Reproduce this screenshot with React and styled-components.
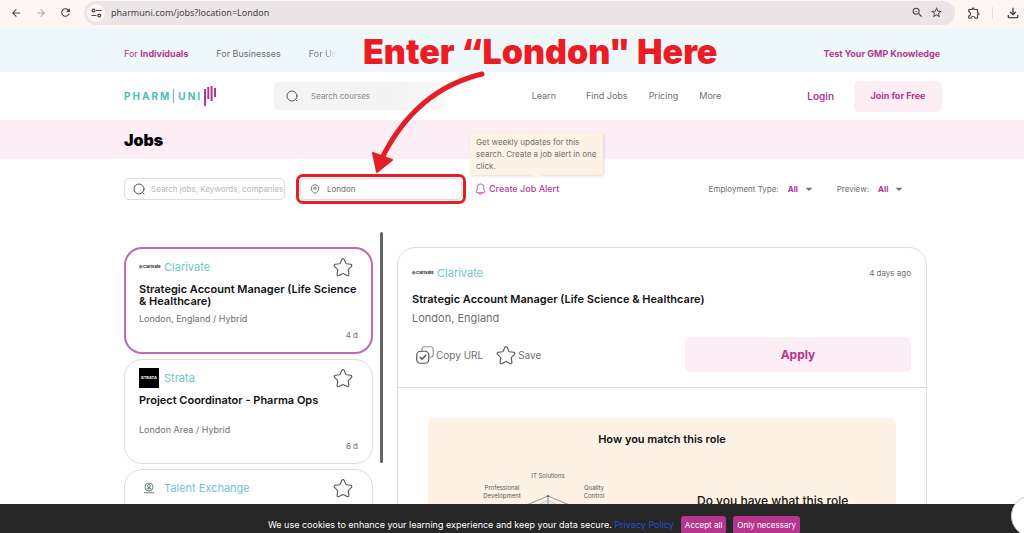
import React from "react";
import styled, { createGlobalStyle } from "styled-components";
import {
  MdArrowBack,
  MdArrowForward,
  MdRefresh,
  MdStarBorder,
  MdZoomOut,
  MdOutlineExtension,
  MdOutlineFileDownload,
  MdArrowDropDown,
} from "react-icons/md";

const c = {
  pink: "#b5358f",
  blush: "#fdeef6",
  mint: "#eef8fa",
  teal: "#6cc8c8",
  cream: "#fef2e4",
  grey: "#707070",
  line: "#dcdcdc",
  red: "#e41e26",
  dark: "#262626",
};

const Global = createGlobalStyle`
  * { box-sizing: border-box; }
  html { scrollbar-width: none; }
  body { margin: 0; background: #fefefe; color: #111; font: 10px/12px Inter, "Liberation Sans", sans-serif; }
  h1, h2, h3, p { margin: 0; }
  a { color: inherit; text-decoration: none; }
  button, input, select { font: inherit; color: inherit; border: 0; background: none; padding: 0; margin: 0; outline: 0; }
  button { cursor: pointer; }
  svg { display: block; flex: none; }
`;

const Page = styled.div`
  position: relative;
  height: 100vh;
  overflow: hidden;
`;

/* Browser bar */
const BrowserBar = styled.div`
  display: flex;
  align-items: center;
  height: 28px;
  padding: 0 6px 3px 9px;
  gap: 12px;
  background: #fdf6f3;
  color: #444;
`;
const NavButton = styled.button`
  display: grid;
  place-items: center;
  width: 13px;
  color: ${(p) => (p.$muted ? "#aaa" : "#444")};
`;
const AddressBar = styled.div`
  display: flex;
  align-items: center;
  flex: 1;
  height: 24px;
  padding: 0 12px 0 3px;
  gap: 6px;
  border-radius: 12px;
  background: #ebe5e7;
`;
const SiteInfo = styled.button`
  display: grid;
  place-items: center;
  width: 18px;
  height: 18px;
  border-radius: 9px;
  background: #fbf5f5;
`;
const Address = styled.input`
  flex: 1;
  min-width: 0;
  color: #444;
  font: 9px/14px "Noto Sans", sans-serif;
`;
const Separator = styled.span`
  width: 1px;
  height: 12px;
  background: #e6dcda;
`;

/* Site header */
const AudienceBar = styled.nav`
  display: flex;
  align-items: center;
  gap: 28px;
  height: 44px;
  padding: 8px 84px 0 124px;
  background: ${c.mint};
  color: ${c.grey};
  font-size: 9px;
`;
const AudienceLink = styled.a`
  color: ${(p) => (p.$active ? c.pink : "inherit")};
  ${(p) =>
    p.$fade &&
    `background: linear-gradient(90deg, ${c.grey} 55%, transparent 100%);
     background-clip: text; color: transparent;`}
`;
const TestLink = styled.a`
  margin-left: auto;
  color: ${c.pink};
  font-weight: 700;
`;
const Header = styled.header`
  display: flex;
  align-items: center;
  height: 48px;
  padding: 0 82px 0 124px;
  color: ${c.grey};
`;
const Brand = styled.a`
  display: flex;
  align-items: center;
  width: 150px;
  gap: 2px;
  color: #4dbfb5;
  font: 700 10px/20px Inter, sans-serif;
  letter-spacing: 2px;
`;
const BrandRule = styled.span`
  width: 1px;
  height: 14px;
  margin-right: 2px;
  background: #4dbfb5;
`;
const CourseSearch = styled.label`
  display: flex;
  align-items: center;
  width: 171px;
  height: 28px;
  padding: 0 12px;
  gap: 13px;
  border-radius: 4px;
  background: linear-gradient(90deg, #f5f4f4 70%, #faf9f9);
`;
const TextInput = styled.input`
  flex: 1;
  min-width: 0;
  font-size: 8px;
  color: ${c.grey};
  &::placeholder { color: ${(p) => (p.$pale ? "#b8b8b8" : "#888")}; opacity: 1; }
`;
const MainNav = styled.nav`
  display: flex;
  gap: 21px;
  margin-left: auto;
  font-size: 9px;
  a:first-child { margin-right: 9px; }
`;
const LoginLink = styled.a`
  margin: 0 20px 0 86px;
  color: ${c.pink};
  font-size: 10px;
  font-weight: 600;
`;
const SoftButton = styled.button`
  height: ${(p) => (p.$large ? 35 : 31)}px;
  width: ${(p) => (p.$large ? 226 : 88)}px;
  border-radius: 6px;
  background: ${c.blush};
  color: ${c.pink};
  font-size: ${(p) => (p.$large ? 12 : 9)}px;
  font-weight: 700;
`;
const TitleBand = styled.div`
  display: flex;
  align-items: center;
  height: 39px;
  padding-left: 124px;
  background: ${c.blush};
`;
const PageTitle = styled.h1`
  font-size: 16px;
  line-height: 20px;
  font-weight: 900;
  color: #000;
`;

/* Filters */
const Filters = styled.form`
  display: flex;
  align-items: center;
  height: 88px;
  padding: 0 117px 28px 124px;
  color: ${c.grey};
  font-size: 8px;
`;
const Field = styled.label`
  display: flex;
  align-items: center;
  width: ${(p) => p.$width}px;
  height: 22px;
  padding-left: 8px;
  gap: 6px;
  border: 1px solid ${c.line};
  border-radius: 5px;
`;
const Highlight = styled.div`
  margin: 0 9px 0 11px;
  padding: 1px;
  border: 3px solid ${c.red};
  border-radius: 7px;
`;
const AlertArea = styled.div`
  position: relative;
`;
const AlertButton = styled.button`
  display: flex;
  align-items: center;
  gap: 3px;
  color: #b03da0;
  font-size: 9px;
  font-weight: 500;
`;
const AlertTip = styled.div`
  position: absolute;
  left: -5px;
  bottom: 20px;
  width: 133px;
  padding: 3px 6px;
  border-radius: 3px;
  background: ${c.cream};
  box-shadow: 1px 1px 3px #0002;
  line-height: 12px;
  &::after {
    content: "";
    position: absolute;
    left: 62px;
    bottom: -4px;
    border: solid transparent;
    border-width: 4px 5px 0;
    border-top-color: ${c.cream};
  }
`;
const Picks = styled.div`
  display: flex;
  gap: 20px;
  margin-left: auto;
`;
const Pick = styled.label`
  display: flex;
  align-items: center;
`;
const PickSelect = styled.select`
  appearance: none;
  margin: 0 2px 0 9px;
  color: ${c.pink};
  font-weight: 700;
`;

/* Job list and details */
const Content = styled.main`
  display: flex;
  align-items: flex-start;
  padding: 0 97px 0 124px;
`;
const JobList = styled.div`
  display: flex;
  flex-direction: column;
  flex: none;
  width: 249px;
  gap: 5px;
`;
const JobCard = styled.article`
  padding: ${(p) => (p.$selected ? "8px 13px 11px" : "8px 14px 11px")};
  border: ${(p) => (p.$selected ? `2px solid #c06ab4` : `1px solid ${c.line}`)};
  border-radius: 18px;
`;
const CompanyRow = styled.div`
  display: flex;
  align-items: center;
  height: 20px;
  gap: 5px;
`;
const Company = styled.a`
  flex: 1;
  color: ${c.teal};
  font-size: 11px;
`;
const LogoBox = styled.span`
  display: grid;
  place-items: center;
  width: 20px;
  height: 20px;
  background: ${(p) => (p.$dark ? "#000" : "transparent")};
  color: ${(p) => (p.$dark ? "#fff" : "#222")};
  font: 700 4px/6px Inter, sans-serif;
  white-space: nowrap;
`;
const IconButton = styled.button`
  display: flex;
  align-items: center;
  gap: 2px;
  margin-right: ${(p) => (p.$card ? 5 : 0)}px;
  color: ${c.grey};
  font-size: 10px;
`;
const CardTitle = styled.h2`
  min-height: 24px;
  margin: 6px 0;
  font-size: 11px;
  line-height: 12px;
  font-weight: 600;
`;
const Place = styled.p`
  color: ${c.grey};
  font-size: ${(p) => (p.$large ? 11 : 9)}px;
  line-height: 12px;
`;
const Age = styled.p`
  margin-top: 4px;
  color: ${c.grey};
  font-size: 8px;
  line-height: 12px;
  text-align: right;
`;
const ScrollThumb = styled.div`
  flex: none;
  width: 3px;
  height: 231px;
  margin: -15px 14px 0 7px;
  border-radius: 2px;
  background: #666;
`;
const Detail = styled.section`
  flex: 1;
  min-width: 0;
  border: 1px solid ${c.line};
  border-radius: 18px;
`;
const DetailHead = styled.div`
  padding: 15px 15px 15px 14px;
  border-bottom: 1px solid ${c.line};
`;
const DetailTitle = styled.h2`
  margin: 9px 0 6px;
  font-size: 11px;
  line-height: 14px;
  font-weight: 600;
`;
const DetailAge = styled.time`
  color: ${c.grey};
  font-size: 8px;
`;
const Actions = styled.div`
  display: flex;
  align-items: center;
  gap: 13px;
  margin-top: 13px;
  padding-left: 4px;
  button:last-child { margin-left: auto; }
`;
const MatchPanel = styled.div`
  margin: 30px;
  padding-top: 14px;
  border-radius: 6px;
  background: ${c.cream};
`;
const MatchTitle = styled.h3`
  font-size: 11px;
  line-height: 14px;
  font-weight: 600;
  text-align: center;
`;
const MatchBody = styled.div`
  display: grid;
  grid-template-columns: 240px 1fr;
  margin-top: 26px;
`;
const MatchQuestion = styled.p`
  padding: 20px 29px;
  font-size: 12px;
  line-height: 17px;
  font-weight: 500;
`;

/* Overlays */
const CookieBar = styled.aside`
  position: fixed;
  inset: auto 0 0 0;
  display: flex;
  justify-content: center;
  height: 29px;
  padding: 12px 0 0 44px;
  gap: 7px;
  overflow: hidden;
  background: ${c.dark};
  color: #fff;
  font-size: 9px;
  line-height: 18px;
  white-space: nowrap;
  a { color: #2352d8; }
`;
const CookieButton = styled.button`
  height: 18px;
  padding: 0 4px;
  border-radius: 3px;
  background: ${c.pink};
  font-size: 8px;
`;
const ChatButton = styled.button`
  position: fixed;
  right: -29px;
  bottom: -4px;
  width: 42px;
  height: 42px;
  border: 1px solid #ccc;
  border-radius: 50%;
  background: #fff;
`;
const Callout = styled.div`
  position: absolute;
  top: 32px;
  left: 363px;
  color: #ec1c24;
  font-size: 34px;
  line-height: 40px;
  font-weight: 900;
  white-space: nowrap;
`;
const CalloutArrow = styled.svg`
  position: absolute;
  top: 68px;
  left: 366px;
`;

const Lens = ({ size = 12 }) => (
  <svg width={size} height={size} viewBox="0 0 24 24" fill="none" stroke="#555" strokeWidth="2" strokeLinecap="round">
    <circle cx="12" cy="12" r="10" />
    <path d="M19.5 19.5 22 22" />
  </svg>
);
const Star = () => (
  <svg width="20" height="20" viewBox="0 0 24 24" fill="none" stroke="#555" strokeWidth="1.3" strokeLinejoin="round">
    <path d="M10.7 2.8c.6-1.3 2-1.3 2.6 0l2 4.4c.2.4.5.7 1 .8l4.9.8c1.4.2 1.9 1.500.9 2.500l-3.500 3.600c-.3.3-.4.8-.3 1.200l.8 4.700c.2 1.500-.9 2.200-2.200 1.500l-4.200-2.300c-.4-.2-1-.2-1.400 0l-4.200 2.300c-1.300.7-2.400 0-2.200-1.500l.8-4.700c.1-.4 0-.9-.3-1.200L1.900 11.300c-1-1-.5-2.300.9-2.500L7.700 8c.5-.1.8-.4 1-.8z" />
  </svg>
);
const CopyIcon = () => (
  <svg width="18" height="18" viewBox="0 0 24 24" fill="none" stroke="#555" strokeWidth="1.6" strokeLinecap="round" strokeLinejoin="round">
    <path stroke="#999" d="M8 6V5c0-3 1-4 4-4h7c3 0 4 1 4 4v6c0 3-1 4-4 4" />
    <rect x="1" y="7" width="16" height="16" rx="5" />
    <path d="m5.500 15 2.500 2.500 5-5" strokeWidth="2" />
  </svg>
);
const Bell = () => (
  <svg width="11" height="12" viewBox="0 0 22 24" fill="none" stroke="#b03da0" strokeWidth="1.8" strokeLinejoin="round">
    <path d="M11 2C7 2 4.500 5 4.500 9v3.500c0 1.500-2.500 3.500-2.500 5C2 19 3 19.500 5 19.500h12c2 0 3-.5 3-2 0-1.500-2.500-3.500-2.500-5V9c0-4-2.500-7-6.500-7z" />
    <path d="M8 20c.5 3 5.500 3 6 0" />
  </svg>
);
const Pin = () => (
  <svg width="12" height="10" viewBox="0 0 24 20" fill="none" stroke="#555" strokeWidth="1.6">
    <path d="M12 1.500c-4.500 0-7.500 3.200-7.500 7.200 0 4.800 4.500 9.800 7.500 9.800s7.500-5 7.500-9.800c0-4-3-7.200-7.500-7.200z" />
    <circle cx="12" cy="8.500" r="2.300" />
  </svg>
);
const Tune = () => (
  <svg width="11" height="10" viewBox="0 0 22 20" fill="none" stroke="#444" strokeWidth="2.400">
    <circle cx="5" cy="5" r="2.800" />
    <path d="M10 5h11M1 15h10" />
    <circle cx="16.500" cy="15" r="2.800" />
  </svg>
);
const BrandMark = () => (
  <svg width="12" height="22" viewBox="0 0 12 22" fill="none" stroke="#b5358f" strokeWidth="2">
    <path d="M1 21V4M4.300 14V2M7.600 16V1M11 12V3" />
  </svg>
);
const BadgeLogo = () => (
  <svg width="12" height="12" viewBox="0 0 24 24" fill="none" stroke="#456b67" strokeWidth="1.600">
    <circle cx="12" cy="10" r="8" />
    <circle cx="12" cy="8" r="3" />
    <path d="M7 14q5-5 10 0M12 10v6M2 21.500h20" />
  </svg>
);
const Radar = () => (
  <svg width="240" height="150" viewBox="0 0 240 150" fill="#555" fontSize="6" textAnchor="middle">
    <text x="120" y="6">IT Solutions</text>
    <text x="74" y="18">Professional</text>
    <text x="74" y="26">Development</text>
    <text x="166" y="18">Quality</text>
    <text x="166" y="26">Control</text>
    <g fill="none" stroke="#8b949c" strokeWidth="1">
      <path d="M120 24 168 44 180 92 148 130H92L60 92 72 44z" />
      <path d="M120 28 160 48 170 90 144 122H96L70 90 80 48z" fill="#e4e9ee" stroke="#c6d0d8" />
      <path d="M120 24v60" />
    </g>
    <circle cx="120" cy="24" r="1" />
  </svg>
);

const jobs = [
  { company: "Clarivate", logo: "◎ Clarivate", title: "Strategic Account Manager (Life Science & Healthcare)", place: "London, England / Hybrid", age: "4 d", selected: true },
  { company: "Strata", logo: "STRATA", dark: true, title: "Project Coordinator - Pharma Ops", place: "London Area / Hybrid", age: "6 d" },
  { company: "Talent Exchange", logo: <BadgeLogo />, title: "", place: "", age: "" },
];

function Select({ label }) {
  return (
    <Pick>
      {label}
      <PickSelect aria-label={label}>
        <option>All</option>
      </PickSelect>
      <MdArrowDropDown size={16} />
    </Pick>
  );
}

export default function App() {
  return (
    <Page>
      <Global />
      <BrowserBar>
        <NavButton aria-label="Back"><MdArrowBack size={12} /></NavButton>
        <NavButton aria-label="Forward" $muted><MdArrowForward size={12} /></NavButton>
        <NavButton aria-label="Reload"><MdRefresh size={13} /></NavButton>
        <AddressBar>
          <SiteInfo aria-label="Site information"><Tune /></SiteInfo>
          <Address aria-label="Address" defaultValue="pharmuni.com/jobs?location=London" />
          <NavButton aria-label="Zoom"><MdZoomOut size={13} /></NavButton>
          <NavButton aria-label="Bookmark"><MdStarBorder size={13} /></NavButton>
        </AddressBar>
        <NavButton aria-label="Extensions"><MdOutlineExtension size={14} /></NavButton>
        <Separator />
        <NavButton aria-label="Downloads"><MdOutlineFileDownload size={16} /></NavButton>
      </BrowserBar>

      <AudienceBar>
        <AudienceLink href="#" $active>For <b>Individuals</b></AudienceLink>
        <AudienceLink href="#">For Businesses</AudienceLink>
        <AudienceLink href="#" $fade>For Un</AudienceLink>
        <TestLink href="#">Test Your GMP Knowledge</TestLink>
      </AudienceBar>

      <Header>
        <Brand href="#">
          PHARM<BrandRule />UNI<BrandMark />
        </Brand>
        <CourseSearch>
          <Lens />
          <TextInput aria-label="Search courses" placeholder="Search courses" />
        </CourseSearch>
        <MainNav>
          <a href="#">Learn</a>
          <a href="#">Find Jobs</a>
          <a href="#">Pricing</a>
          <a href="#">More</a>
        </MainNav>
        <LoginLink href="#">Login</LoginLink>
        <SoftButton>Join for Free</SoftButton>
      </Header>

      <TitleBand><PageTitle>Jobs</PageTitle></TitleBand>

      <Filters>
        <Field $width={161}>
          <Lens />
          <TextInput $pale aria-label="Search jobs" placeholder="Search jobs, Keywords, companies" />
        </Field>
        <Highlight>
          <Field $width={162}>
            <Pin />
            <TextInput aria-label="Location" defaultValue="London" />
          </Field>
        </Highlight>
        <AlertArea>
          <AlertButton type="button"><Bell />Create Job Alert</AlertButton>
          <AlertTip role="tooltip">Get weekly updates for this search. Create a job alert in one click.</AlertTip>
        </AlertArea>
        <Picks>
          <Select label="Employment Type:" />
          <Select label="Preview:" />
        </Picks>
      </Filters>

      <Content>
        <JobList>
          {jobs.map((job) => (
            <JobCard key={job.company} $selected={job.selected}>
              <CompanyRow>
                <LogoBox $dark={job.dark}>{job.logo}</LogoBox>
                <Company href="#">{job.company}</Company>
                <IconButton $card aria-label="Save job"><Star /></IconButton>
              </CompanyRow>
              <CardTitle>{job.title}</CardTitle>
              <Place>{job.place}</Place>
              <Age>{job.age}</Age>
            </JobCard>
          ))}
        </JobList>
        <ScrollThumb />
        <Detail>
          <DetailHead>
            <CompanyRow>
              <LogoBox>◎ Clarivate</LogoBox>
              <Company href="#">Clarivate</Company>
              <DetailAge>4 days ago</DetailAge>
            </CompanyRow>
            <DetailTitle>Strategic Account Manager (Life Science &amp; Healthcare)</DetailTitle>
            <Place $large>London, England</Place>
            <Actions>
              <IconButton><CopyIcon />Copy URL</IconButton>
              <IconButton><Star />Save</IconButton>
              <SoftButton $large>Apply</SoftButton>
            </Actions>
          </DetailHead>
          <MatchPanel>
            <MatchTitle>How you match this role</MatchTitle>
            <MatchBody>
              <Radar />
              <MatchQuestion>Do you have what this role</MatchQuestion>
            </MatchBody>
          </MatchPanel>
        </Detail>
      </Content>

      <CookieBar>
        <span>
          We use cookies to enhance your learning experience and keep your data secure. <a href="#">Privacy Policy</a>
        </span>
        <CookieButton>Accept all</CookieButton>
        <CookieButton>Only necessary</CookieButton>
      </CookieBar>
      <ChatButton aria-label="Open chat" />

      <Callout>Enter “London" Here</Callout>
      <CalloutArrow width="122" height="108" viewBox="0 0 122 108">
        <path d="M116 6C70 17 38 46 16 90" fill="none" stroke="#e41e26" strokeWidth="5" strokeLinecap="round" />
        <path d="M7 85 26 92 11 104z" fill="#e41e26" stroke="#e41e26" strokeWidth="2" strokeLinejoin="round" />
      </CalloutArrow>
    </Page>
  );
}
